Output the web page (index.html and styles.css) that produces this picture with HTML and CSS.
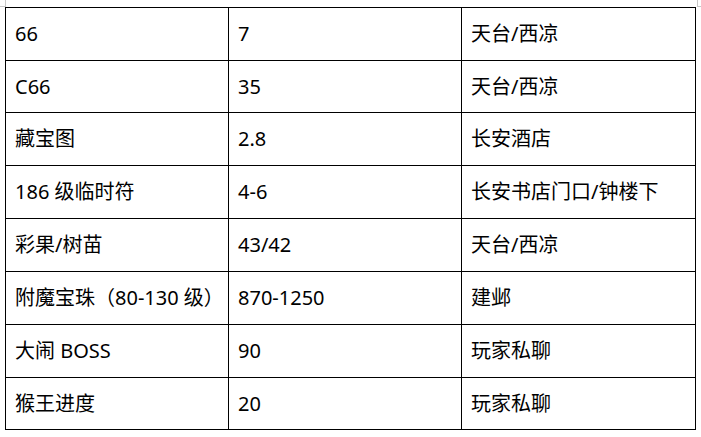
FILE: index.html
```html
<!DOCTYPE html>
<html lang="zh-CN">
<head>
<meta charset="utf-8">
<link rel="stylesheet" href="styles.css">
</head>
<body>
<div class="mark mark-tl-v"></div>
<div class="mark mark-tl-h"></div>
<div class="mark mark-tr-v"></div>
<div class="mark mark-tr-h"></div>
<table class="price">
  <colgroup>
    <col class="c1"><col class="c2"><col class="c3">
  </colgroup>
  <tbody>
    <tr><td>66</td><td>7</td><td>天台/西凉</td></tr>
    <tr class="short"><td>C66</td><td>35</td><td>天台/西凉</td></tr>
    <tr><td>藏宝图</td><td>2.8</td><td>长安酒店</td></tr>
    <tr><td>186 级临时符</td><td>4-6</td><td>长安书店门口/钟楼下</td></tr>
    <tr><td>彩果/树苗</td><td>43/42</td><td>天台/西凉</td></tr>
    <tr><td>附魔宝珠（80-130 级）</td><td>870-1250</td><td>建邺</td></tr>
    <tr><td>大闹 BOSS</td><td>90</td><td>玩家私聊</td></tr>
    <tr class="short"><td>猴王进度</td><td>20</td><td>玩家私聊</td></tr>
  </tbody>
</table>
</body>
</html>
```
FILE: styles.css
```css
html, body {
  margin: 0;
  padding: 0;
  background: #ffffff;
}
body {
  position: relative;
  width: 701px;
  height: 437px;
  overflow: hidden;
  font-family: "Noto Sans", "Noto Sans CJK SC", sans-serif;
  font-size: 20px;
  color: #000000;
}
.price {
  border-collapse: collapse;
  margin: 7px 0 0 5px;
  table-layout: fixed;
  width: 690px;
}
.c1 { width: 223px; }
.c2 { width: 233px; }
.c3 { width: 234px; }
.price td {
  border: 1px solid #000000;
  height: 52px;
  padding: 0 0 0 9px;
  vertical-align: middle;
  white-space: nowrap;
  line-height: 24px;
}
.price tr.short td {
  height: 51px;
}
.mark {
  position: absolute;
  background: #c8c8c8;
}
.mark-tl-v { left: 5px; top: 0; width: 1px; height: 7px; }
.mark-tl-h { left: 0; top: 6px; width: 5px; height: 1px; }
.mark-tr-v { left: 697px; top: 0; width: 1px; height: 7px; }
.mark-tr-h { left: 697px; top: 6px; width: 4px; height: 1px; }
```
